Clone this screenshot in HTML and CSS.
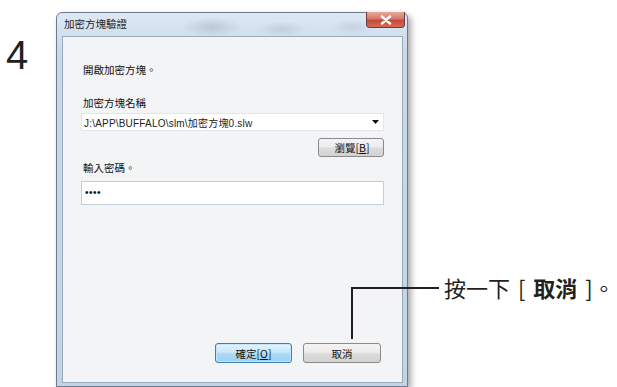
FILE: index.html
```html
<!DOCTYPE html>
<html lang="zh-Hant">
<head>
<meta charset="utf-8">
<link rel="stylesheet" href="styles.css">
</head>
<body>
<div class="page">
  <div class="step">4</div>
  <div class="window">
    <div class="titlebar">
      <span class="title">加密方塊驗證</span>
      <div class="close">
        <svg width="12" height="10" viewBox="0 0 12 10"><path d="M2 1.5 L10 8.5 M10 1.5 L2 8.5" stroke="#fff" stroke-width="2.4" stroke-linecap="round"/></svg>
      </div>
    </div>
    <div class="content">
      <div class="text intro">開啟加密方塊。</div>
      <div class="text label">加密方塊名稱</div>
      <div class="combo">
        <span class="path">J:\APP\BUFFALO\slm\加密方塊0.slw</span>
        <svg class="arrow" width="7" height="4" viewBox="0 0 7 4"><path d="M0 0 H7 L3.5 4 Z" fill="#111"/></svg>
      </div>
      <div class="browse-row"><div class="btn browse">瀏覽[<u>B</u>]</div></div>
      <div class="text label2">輸入密碼。</div>
      <div class="pwd">••••</div>
      <div class="spacer"></div>
      <div class="btn-row">
        <div class="btn ok">確定[<u>O</u>]</div>
        <div class="btn cancel">取消</div>
      </div>
    </div>
  </div>
  <div class="callout">
    <div class="hline"></div>
    <div class="vline"></div>
    <div class="callout-text">按一下 [ <b>取消</b> ]。</div>
  </div>
</div>
</body>
</html>
```
FILE: styles.css
```css
* { box-sizing: border-box; }
html, body { margin: 0; padding: 0; background: #fff; }
.page {
  position: relative;
  width: 617px;
  height: 387px;
  overflow: hidden;
  display: flex;
  align-items: flex-start;
  padding-top: 12px;
}
.step {
  font-family: "Liberation Sans", Arial, sans-serif;
  font-size: 40px;
  line-height: 40px;
  color: #231f20;
  margin-top: 23px;
  margin-left: 6px;
  width: 50px;
}
.window {
  width: 352px;
  height: 375px;
  display: flex;
  flex-direction: column;
  border: 1px solid #6d7b8c;
  border-radius: 6px 6px 0 0;
  background: linear-gradient(180deg, #dde8f4 0%, #c9d9eb 10%, #c3d4e8 100%);
  box-shadow: 3px 3px 6px rgba(0,0,0,0.35);
  padding: 0 4px 3px 5px;
}
.titlebar {
  height: 23px;
  flex: none;
  display: flex;
  align-items: flex-start;
  justify-content: space-between;
  background:
    radial-gradient(ellipse 30px 10px at 150px 14px, rgba(120,130,140,0.28), transparent),
    radial-gradient(ellipse 25px 8px at 220px 16px, rgba(120,130,140,0.2), transparent),
    radial-gradient(ellipse 20px 8px at 290px 14px, rgba(120,130,140,0.18), transparent);
}
.title {
  font-family: "Noto Sans CJK TC", sans-serif;
  font-size: 10.5px;
  line-height: 12px;
  color: #1e1e1e;
  margin-top: 5px;
  margin-left: 2px;
}
.close {
  width: 39px;
  height: 16px;
  margin-top: -1px;
  margin-right: -2px;
  border: 1px solid #6f3a3a;
  border-top: none;
  border-radius: 0 0 4px 4px;
  background: linear-gradient(180deg, #e9a99a 0%, #d7776a 45%, #c24a3c 55%, #d86a50 100%);
  display: flex;
  align-items: center;
  justify-content: center;
}
.content {
  flex: 1;
  display: flex;
  flex-direction: column;
  background: #f3f4f6;
  border: 1px solid #9aaabb;
  padding: 0 18px 19px 18px;
  font-family: "Liberation Sans", "Noto Sans CJK TC", sans-serif;
  color: #111;
}
.text {
  font-family: "Noto Sans CJK TC", sans-serif;
  font-size: 10.5px;
  line-height: 12px;
  padding-left: 2px;
}
.intro { margin-top: 27px; }
.label { margin-top: 21px; }
.combo {
  margin-top: 4px;
  height: 18px;
  background: #fff;
  border: 1px solid #e2e5ea;
  display: flex;
  align-items: center;
  justify-content: space-between;
  padding: 0 4px 0 2px;
}
.path {
  font-size: 10px;
  letter-spacing: 0.2px;
  color: #222;
}
.browse-row {
  display: flex;
  justify-content: flex-end;
  margin-top: 7px;
}
.btn {
  font-family: "Noto Sans CJK TC", sans-serif;
  font-size: 10.5px;
  color: #111;
  display: flex;
  align-items: center;
  justify-content: center;
  border: 1px solid #8a8a8a;
  border-radius: 3px;
  background: linear-gradient(180deg, #f4f4f4 0%, #ececec 45%, #dcdcdc 55%, #d2d2d2 100%);
}
.browse { width: 66px; height: 19px; padding-left: 2px; }
.label2 { margin-top: 5px; }
.pwd {
  margin-top: 7px;
  height: 24px;
  background: #fff;
  border: 1px solid #c4cdd8;
  font-size: 10px;
  line-height: 22px;
  padding-left: 3px;
  color: #111;
  letter-spacing: 0.5px;
}
.spacer { flex: 1; }
.btn-row {
  display: flex;
  justify-content: flex-end;
  gap: 11px;
  padding-right: 3px;
}
.ok, .cancel { height: 20px; width: 77px; }
.ok {
  border-color: #3c7fb1;
  background: linear-gradient(180deg, #e6f4fc 0%, #c8e7f9 45%, #a9d9f6 55%, #9dd1f2 100%);
  box-shadow: inset 0 0 0 1px #bfe6fb;
}
.cancel { width: 78px; }
.callout {
  position: absolute;
  left: 351px;
  top: 287px;
}
.hline {
  position: absolute;
  left: 0;
  top: 0;
  width: 88px;
  height: 2px;
  background: #231f20;
}
.vline {
  position: absolute;
  left: 0;
  top: 0;
  width: 2px;
  height: 52px;
  background: #231f20;
}
.callout-text {
  position: absolute;
  left: 93px;
  top: -15px;
  white-space: nowrap;
  font-family: "Noto Sans CJK TC", sans-serif;
  font-size: 22px;
  line-height: 30px;
  word-spacing: 3px;
  color: #231f20;
}
.callout-text b { font-weight: 700; }
```
